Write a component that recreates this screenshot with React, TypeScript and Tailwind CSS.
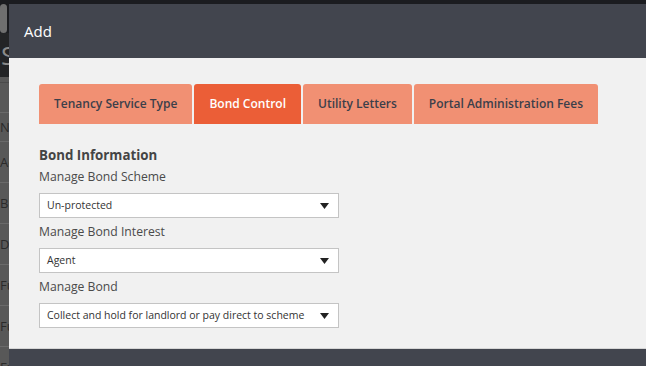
const tabs = ['Tenancy Service Type', 'Bond Control', 'Utility Letters', 'Portal Administration Fees']

const fields = [
  { label: 'Manage Bond Scheme', value: 'Un-protected' },
  { label: 'Manage Bond Interest', value: 'Agent' },
  { label: 'Manage Bond', value: 'Collect and hold for landlord or pay direct to scheme' },
]

function Caret() {
  return (
    <svg width="9" height="6" viewBox="0 0 9 6" className="shrink-0">
      <path d="M0 0h9L4.5 6z" fill="#222" />
    </svg>
  )
}

export default function App() {
  return (
    <div
      className="relative w-[646px] h-[366px] overflow-hidden bg-[#1b1c20]"
      style={{ fontFamily: '"Open Sans", "Noto Sans", sans-serif' }}
    >
      {/* dimmed page behind the modal */}
      <div className="flex flex-col pt-[4px] text-[#9a9a9a]">
        <div className="h-[29px] w-[7px] rounded-sm bg-[#6f6f6f]" />
        <div className="h-[44px] bg-[#232426] text-[26px] leading-[44px] pl-[1px] text-[#8a8a8a]">S</div>
        <div className="bg-[#585858] text-[13px] text-[#2a2a2a]">
          <div className="h-[6px] border-b border-[#4a4a4a]" />
          <div className="h-[30px] border-b border-[#6a6a6a]" />
          <div className="h-[29px] border-b border-[#6a6a6a] leading-[29px]">N</div>
          {['Ac', 'Bl', 'Du', 'Fu', 'Fu', 'Fu'].map((t, i) => (
            <div key={i} className="h-[41px] border-b border-[#6a6a6a] leading-[30px] pt-[5px]">{t}</div>
          ))}
        </div>
      </div>

      {/* modal */}
      <div className="absolute left-[9px] top-[4px] right-0 bottom-0 flex flex-col">
        <div className="h-[54px] shrink-0 bg-[#42454e] px-[15px] flex items-center text-white text-[15px]">
          Add
        </div>
        <div className="h-[291px] shrink-0 bg-[#f1f1f1] pt-[26px] pl-[30px] border-b border-[#d6d6d6]">
          <div className="flex gap-[2px]">
            {tabs.map((t, i) => (
              <div
                key={t}
                className={
                  'h-[40px] px-[15px] flex items-center rounded-t-[3px] text-[12px] font-semibold ' +
                  (i === 1 ? 'bg-[#eb5e37] text-white' : 'bg-[#f19073] text-[#3c3f4a]')
                }
              >
                {t}
              </div>
            ))}
          </div>

          <div className="pt-[22px] text-[#444]">
            <div className="text-[13.3px] font-bold leading-[18px]">Bond Information</div>
            {fields.map(f => (
              <div key={f.label}>
                <div className="text-[12.2px] leading-[18px] mt-[4px] text-[#4a4a4a]">{f.label}</div>
                <div className="mt-[7px] mb-[5px] w-[300px] h-[25px] bg-white border border-[#c4c4c4] flex items-center justify-between pl-[7px] pr-[9px] text-[10.5px] text-[#333]">
                  <span>{f.value}</span>
                  <Caret />
                </div>
              </div>
            ))}
          </div>
        </div>
        <div className="flex-1 bg-[#42454e]" />
      </div>
    </div>
  )
}
